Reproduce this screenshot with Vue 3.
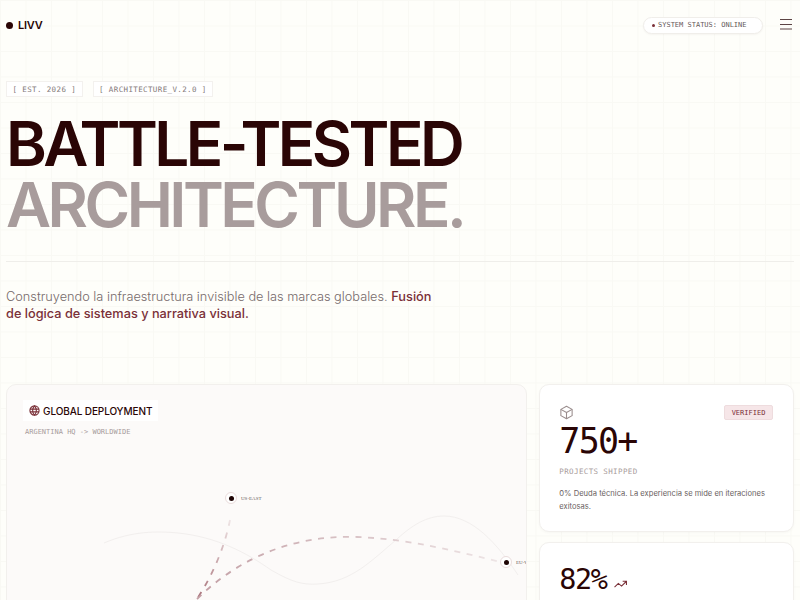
<script setup>
const tags = ['[ EST. 2026 ]', '[ ARCHITECTURE_V.2.0 ]']
</script>

<template>
  <div class="page">
    <header class="top">
      <div class="brand"><span class="dot"></span><span>LIVV</span></div>
      <div class="top-right">
        <div class="status"><span class="sdot"></span>SYSTEM STATUS: ONLINE</div>
        <svg class="menu" width="14" height="14" viewBox="0 0 14 14" fill="none" stroke="#5c4444" stroke-width="1">
          <path d="M1 1.5h12M1 6.5h12M1 11h12" />
        </svg>
      </div>
    </header>

    <section class="hero">
      <div class="tags"><span v-for="t in tags" :key="t" class="tag">{{ t }}</span></div>
      <h1>BATTLE-TESTED<br /><span>ARCHITECTURE.</span></h1>
      <hr />
      <p class="lead">Construyendo la infraestructura invisible de las marcas globales. <b>Fusión de lógica de sistemas y narrativa visual.</b></p>
    </section>

    <section class="grid">
      <article class="map">
        <svg class="lines" width="521" height="300" viewBox="0 0 521 300" fill="none">
          <defs>
            <linearGradient id="fade1" gradientUnits="userSpaceOnUse" x1="190" y1="0" x2="495" y2="0">
              <stop offset="0" stop-color="#c39fa5" />
              <stop offset="1" stop-color="#eee5e6" />
            </linearGradient>
            <linearGradient id="fade2" gradientUnits="userSpaceOnUse" x1="0" y1="212" x2="0" y2="130">
              <stop offset="0" stop-color="#a9737b" />
              <stop offset="1" stop-color="#f3ecec" />
            </linearGradient>
          </defs>
          <path d="M97 158C125 146 150 146 171 148C210 152 240 168 264 185C285 197 295 200 311 199C345 197 365 175 389 155C405 140 420 131 437 131C465 131 490 158 511 190" stroke="#f2efee" stroke-width="1" />
          <path d="M223 135C218 160 207 188 190 214" stroke="url(#fade2)" stroke-width="1.8" stroke-dasharray="6 7" />
          <path d="M190 214C235 170 290 150 350 152C405 154 455 168 494 177" stroke="url(#fade1)" stroke-width="1.8" stroke-dasharray="6 6.5" />
        </svg>
        <div class="map-head">
          <div class="map-title">
            <svg width="11" height="11" viewBox="0 0 24 24" fill="none" stroke="#7a3038" stroke-width="2.4">
              <circle cx="12" cy="12" r="10" /><path d="M2 9h20M2 15h20M12 2c3 3 4 6 4 10s-1 7-4 10c-3-3-4-6-4-10s1-7 4-10z" />
            </svg>
            GLOBAL DEPLOYMENT
          </div>
          <div class="map-sub">ARGENTINA HQ -&gt; WORLDWIDE</div>
        </div>
        <div class="node n1"><i></i><span>US-EAST</span></div>
        <div class="node n2"><i></i><span>EU-WEST</span></div>
      </article>

      <div class="stack">
        <article class="card">
          <div class="card-top">
            <svg width="15" height="15" viewBox="0 0 24 24" fill="none" stroke="#9a8d8d" stroke-width="1.7" stroke-linejoin="round">
              <path d="M12 2l9 5v10l-9 5-9-5V7z" /><path d="M3 7l9 5 9-5M12 12v10" />
            </svg>
            <span class="badge">VERIFIED</span>
          </div>
          <div class="num">750+</div>
          <div class="label">PROJECTS SHIPPED</div>
          <p class="desc">0% Deuda técnica. La experiencia se mide en iteraciones exitosas.</p>
        </article>
        <article class="card">
          <div class="num2">82%
            <svg width="13" height="9" viewBox="0 0 24 16" fill="none" stroke="#7a3038" stroke-width="2">
              <path d="M1 13l7-7 6 5 9-9M16 2h7v7" />
            </svg>
          </div>
        </article>
      </div>
    </section>
  </div>
</template>

<style scoped>
.page {
  width: 800px;
  height: 600px;
  overflow: hidden;
  box-sizing: border-box;
  padding: 0 6px;
  background-color: #fefefa;
  background-image: linear-gradient(#f9f9f4 1px, transparent 1px), linear-gradient(90deg, #f9f9f4 1px, transparent 1px);
  background-size: 25.5px 25.5px;
  font-family: Inter, sans-serif;
  color: #2a0505;
}
.top {
  height: 50px;
  display: flex;
  align-items: center;
  justify-content: space-between;
}
.brand {
  display: flex;
  align-items: center;
  gap: 5px;
  font-size: 11px;
  font-weight: 600;
  letter-spacing: -.02em;
}
.dot {
  width: 7px;
  height: 7px;
  border-radius: 50%;
  background: #2a0505;
}
.top-right {
  display: flex;
  align-items: center;
  gap: 16px;
}
.status {
  display: flex;
  align-items: center;
  gap: 3px;
  width: 120px;
  height: 17px;
  box-sizing: border-box;
  padding-left: 8px;
  border: 1px solid #f0eeea;
  border-radius: 9px;
  background: #fff;
  font: 7px "DejaVu Sans Mono", monospace;
  color: #665a5a;
  box-shadow: 0 1px 2px rgba(40, 0, 0, .04);
}
.sdot {
  width: 3px;
  height: 3px;
  border-radius: 50%;
  background: #7a3038;
}
.menu { margin-right: 1px; }
.hero { padding-top: 31px; }
.tags {
  display: flex;
  gap: 10px;
}
.tag {
  box-sizing: border-box;
  height: 16px;
  display: flex;
  align-items: center;
  padding: 0 5.5px;
  background: #fff;
  border: 1px solid #f3f1ee;
  font: 7.5px "DejaVu Sans Mono", monospace;
  letter-spacing: .05em;
  color: #857a7a;
}
h1 {
  margin: 16px 0 0;
  font-size: 62px;
  line-height: 61px;
  font-weight: 600;
  letter-spacing: -.057em;
  color: #2a0505;
}
h1 span { color: #a89c9c; }
hr {
  margin: 26px 0 0;
  border: 0;
  height: 1px;
  background: #efeeea;
}
.lead {
  margin: 26px 0 0;
  width: 430px;
  font-size: 12.75px;
  line-height: 17px;
  font-weight: 300;
  color: #766a6a;
}
.lead b { font-weight: 500; color: #7a3038; }
.grid {
  margin-top: 62px;
  display: grid;
  grid-template-columns: repeat(3, 1fr);
  gap: 12px;
}
.map {
  grid-column: span 2;
  position: relative;
  height: 300px;
  box-sizing: border-box;
  padding: 15px 16px;
  border: 1px solid #f2f0ed;
  border-radius: 10px;
  background: #fcfaf9;
  overflow: hidden;
}
.lines { position: absolute; left: 0; top: 0; }
.map-head { position: relative; }
.map-title {
  display: inline-flex;
  align-items: center;
  gap: 3px;
  height: 21px;
  padding: 0 6px;
  background: #fff;
  font-size: 10px;
  font-weight: 500;
  letter-spacing: -.01em;
  color: #2a0505;
  box-sizing: border-box;
}
.map-sub {
  margin-top: 7px;
  padding-left: 2px;
  font: 7px "DejaVu Sans Mono", monospace;
  color: #a89c9c;
}
.node {
  position: absolute;
  display: flex;
  align-items: center;
  gap: 4px;
  font: 5px "Liberation Serif", serif;
  white-space: nowrap;
  color: #6b6060;
}
.node i {
  display: flex;
  align-items: center;
  justify-content: center;
  width: 12px;
  height: 12px;
  box-sizing: border-box;
  border: 1px solid #eadcdc;
  border-radius: 50%;
  background: #fff;
}
.node i::after {
  content: "";
  width: 5px;
  height: 5px;
  border-radius: 50%;
  background: #1e0505;
}
.n1 { left: 218px; top: 107px; }
.n2 { left: 493px; top: 171px; }
.stack {
  display: flex;
  flex-direction: column;
  gap: 10px;
}
.card {
  box-sizing: border-box;
  padding: 20px 20px 19px 19px;
  height: 148px;
  background: #fff;
  border: 1px solid #f2f0ed;
  border-radius: 10px;
  box-shadow: 0 1px 3px rgba(40, 0, 0, .03);
}
.card-top {
  display: flex;
  justify-content: space-between;
  align-items: center;
  height: 15px;
}
.badge {
  box-sizing: border-box;
  width: 49px;
  height: 15px;
  display: flex;
  align-items: center;
  justify-content: center;
  background: #f6e6e8;
  border: 1px solid #eedcde;
  border-radius: 2px;
  font: 7px "DejaVu Sans Mono", monospace;
  color: #7a3038;
}
.num {
  margin-top: 2px;
  font: 35px/38px "DejaVu Sans Mono", monospace;
  letter-spacing: -.05em;
  color: #2a0505;
}
.label {
  margin-top: 7px;
  font: 7.5px "DejaVu Sans Mono", monospace;
  letter-spacing: .05em;
  color: #a89c9c;
}
.desc {
  margin: 11px 0 0;
  font-size: 7.6px;
  line-height: 13px;
  color: #6b5f5f;
}
.num2 {
  display: flex;
  align-items: baseline;
  gap: 7px;
  padding-top: 2px;
  font: 28.5px/30px "DejaVu Sans Mono", monospace;
  letter-spacing: -.05em;
}
</style>
